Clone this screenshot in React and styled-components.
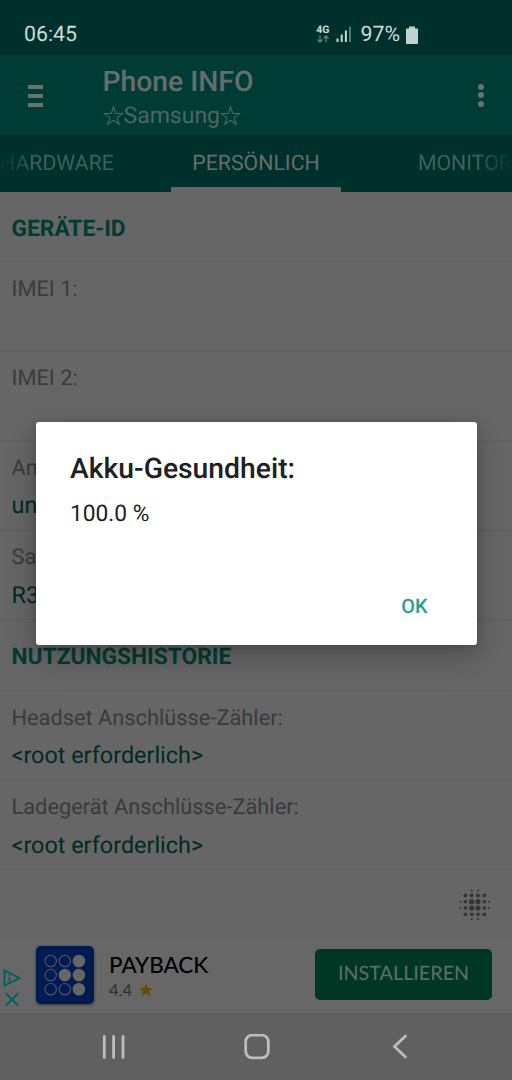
import styled, { createGlobalStyle } from "styled-components";

const App = () => {
  const SECTION_LIST = [
    {
      title: "GERÄTE-ID",
      height: 70,
      items: [
        { label: "IMEI 1:", value: "" },
        { label: "IMEI 2:", value: "" },
        { label: "An", value: "un" },
        { label: "Sa", value: "R3" },
      ],
    },
    {
      title: "NUTZUNGSHISTORIE",
      height: 71,
      items: [
        { label: "Headset Anschlüsse-Zähler:", value: "<root erforderlich>" },
        { label: "Ladegerät Anschlüsse-Zähler:", value: "<root erforderlich>" },
      ],
    },
  ];

  return (
    <St.Screen>
      <GlobalStyle />
      <StatusBar />

      <St.Toolbar>
        <St.MenuBtn type="button">
          <i />
          <i />
          <i />
        </St.MenuBtn>
        <St.TitleBox>
          <St.Title>Phone INFO</St.Title>
          <St.Subtitle>
            <Star />
            Samsung
            <Star />
          </St.Subtitle>
        </St.TitleBox>
        <St.MoreBtn type="button">
          <i />
          <i />
          <i />
        </St.MoreBtn>
      </St.Toolbar>

      <St.TabBar>
        <St.Tab $side="left">HARDWARE</St.Tab>
        <St.Tab $active>PERSÖNLICH</St.Tab>
        <St.Tab $side="right">MONITOR</St.Tab>
      </St.TabBar>

      <St.Content>
        {SECTION_LIST.map(({ title, height, items }) => (
          <section key={title}>
            <St.SectionTitle $height={height}>{title}</St.SectionTitle>
            {items.map(({ label, value }) => (
              <St.Item key={label}>
                <St.Label>{label}</St.Label>
                <St.Value>{value}</St.Value>
              </St.Item>
            ))}
          </section>
        ))}
        <St.Footer>
          <DotLogo />
        </St.Footer>
      </St.Content>

      <AdBanner />
      <NavBar />

      <St.Dialog role="dialog">
        <St.DialogTitle>Akku-Gesundheit:</St.DialogTitle>
        <St.DialogText>100.0 %</St.DialogText>
        <St.DialogBtn type="button">OK</St.DialogBtn>
      </St.Dialog>
    </St.Screen>
  );
};

export default App;

const StatusBar = () => (
  <St.StatusBar>
    <St.Clock>06:45</St.Clock>
    <St.Network>
      <St.NetworkType>4G</St.NetworkType>
      <svg width="12" height="8" viewBox="0 0 12 8" fill="none" stroke="#5b827d" strokeWidth="1.3">
        <path d="M3 0.5V7M0.5 4.500L3 7L5.500 4.500M9 7.500V1M6.500 3.500L9 1L11.500 3.500" />
      </svg>
    </St.Network>
    <St.Signal width="16" height="16" viewBox="0 0 16 16">
      <path fill="#c5d8d5" d="M0.5 12.500h2v3.500h-2zM4.700 8.500h2v7.500h-2zM8.900 4.500h2v11.500h-2z" />
      <path fill="#527a75" d="M13 0.5h2v15.500h-2z" />
    </St.Signal>
    <St.Percent>97%</St.Percent>
    <svg width="12" height="18" viewBox="0 0 12 18">
      <path fill="#c0d3d0" d="M3 0.5h6v2h2q1 0 1 1v13.500q0 1-1 1h-10q-1 0-1-1v-13.500q0-1 1-1h2z" />
    </svg>
  </St.StatusBar>
);

const Star = () => (
  <svg width="21" height="20" viewBox="0 0 21 20" fill="none" stroke="#4d6663" strokeWidth="1.1">
    <path d="M10.500 1L12.700 7.500H19.800L14.100 11.600L16.200 18.300L10.500 14.200L4.800 18.300L6.900 11.600L1.200 7.500H8.300Z" />
  </svg>
);

const DotLogo = () => {
  const DOT_SIZES = [
    [0, 0, 1, 1, 0, 0],
    [0, 1.9, 1.9, 1.9, 1.9, 0],
    [1, 1.8, 2.6, 2.6, 1.8, 1],
    [1, 1.8, 2.6, 2.6, 1.8, 1],
    [0, 1.9, 1.9, 1.9, 1.9, 0],
    [0, 0, 1, 1, 0, 0],
  ];
  const DOT_CENTERS = [1.4, 6.4, 12.7, 19, 25.3, 30];

  return (
    <svg width="32" height="32" viewBox="0 0 32 32" fill="#353535">
      {DOT_SIZES.map((row, y) =>
        row.map((r, x) => (
          <circle key={`${x}-${y}`} cx={DOT_CENTERS[x]} cy={DOT_CENTERS[y]} r={r} />
        ))
      )}
    </svg>
  );
};

const AdBanner = () => {
  const FILLED = [2, 4, 5, 8];

  return (
    <St.Ad>
      <St.AdChoices width="18" height="40" viewBox="0 0 18 40">
        <path d="M1.500 2.500V17.500L16.500 10Z M6.500 9V14.500 M6.500 6.300V7.700" />
        <path d="M3 25.500L15 37.500M15 25.500L3 37.500" />
      </St.AdChoices>
      <St.AdIcon>
        <svg width="42" height="42" viewBox="0 0 42 42">
          {Array.from({ length: 9 }, (_, i) => (
            <circle
              key={i}
              cx={6.7 + (i % 3) * 14.1}
              cy={7 + Math.floor(i / 3) * 14.1}
              r="5.700"
              fill={FILLED.includes(i) ? "#666" : "none"}
              stroke={FILLED.includes(i) ? "#666" : "#504f76"}
              strokeWidth="1.2"
            />
          ))}
        </svg>
      </St.AdIcon>
      <St.AdInfo>
        <St.AdName>PAYBACK</St.AdName>
        <St.AdRating>
          4.4
          <svg width="14" height="14" viewBox="0 0 14 14" fill="#654900">
            <path d="M7 0.300L8.700 5H13.800L9.800 8.100L11.300 13.200L7 10.200L2.700 13.200L4.200 8.100L0.200 5H5.300Z" />
          </svg>
        </St.AdRating>
      </St.AdInfo>
      <St.InstallBtn type="button">INSTALLIEREN</St.InstallBtn>
    </St.Ad>
  );
};

const NavBar = () => (
  <St.Nav>
    <svg width="26" height="26" viewBox="0 0 26 26">
      <path d="M4.300 2.500V23.500M13.600 2.500V23.500M23 2.500V23.500" />
    </svg>
    <svg width="26" height="26" viewBox="0 0 26 26">
      <rect x="1.700" y="1.200" width="22.600" height="22.600" rx="6.500" />
    </svg>
    <svg width="26" height="26" viewBox="0 0 26 26">
      <path d="M18.500 2L7.500 12.500L18.500 23" />
    </svg>
  </St.Nav>
);

const GlobalStyle = createGlobalStyle`
  * {
    box-sizing: border-box;
  }

  body,
  h1,
  h2,
  p {
    margin: 0;
  }

  body {
    background-color: #666;
    font-family: Roboto, "Liberation Sans", sans-serif;
    text-rendering: geometricPrecision;
  }

  button {
    padding: 0;
    border: none;
    background: none;
    font-family: inherit;
    text-rendering: inherit;
  }

  svg {
    flex-shrink: 0;
  }
`;

const St = {
  Screen: styled.main`
    position: relative;
    display: flex;
    flex-direction: column;

    width: 512px;
    height: 1080px;
    overflow: hidden;

    background-color: #666;
  `,

  StatusBar: styled.header`
    display: flex;
    align-items: center;

    height: 55px;
    padding: 14px 94px 0 24px;

    background-color: #00302b;
    color: #c5dedb;
  `,

  Clock: styled.span`
    margin-right: auto;
    font-size: 21.300px;
  `,

  Network: styled.span`
    display: flex;
    flex-direction: column;
    align-items: center;

    margin: -2px 7px 0 0;
  `,

  NetworkType: styled.span`
    font-size: 10.500px;
    font-weight: 700;
    line-height: 10px;
  `,

  Signal: styled.svg`
    margin: -1px 8px 0 0;
  `,

  Percent: styled.span`
    margin-right: 6px;
    font-size: 21.300px;
  `,

  Toolbar: styled.div`
    display: flex;
    align-items: center;

    height: 80px;
    padding: 0 28px;

    background-color: #003c36;
  `,

  MenuBtn: styled.button`
    display: flex;
    flex-direction: column;
    gap: 5px;

    width: 74.500px;
    padding-top: 2px;

    i {
      width: 15px;
      height: 4px;
      background-color: #667370;
    }
  `,

  TitleBox: styled.div`
    flex: 1;
    padding-top: 7px;
  `,

  Title: styled.h1`
    color: #666e6c;
    font-size: 28.300px;
    font-weight: 500;
    line-height: 34px;
  `,

  Subtitle: styled.p`
    display: flex;
    align-items: center;

    color: #4d6663;
    font-size: 23px;
    line-height: 33px;
  `,

  MoreBtn: styled.button`
    display: flex;
    flex-direction: column;
    gap: 2.500px;

    i {
      width: 6px;
      height: 6px;
      border-radius: 50%;
      background-color: #667370;
    }
  `,

  TabBar: styled.nav`
    display: grid;
    grid-template-columns: 171px 170px 171px;

    height: 57px;

    background-color: #00302b;
  `,

  Tab: styled.div`
    display: flex;
    justify-content: ${({ $side }) => ($side === "right" ? "flex-end" : $side === "left" ? "flex-start" : "center")};
    align-items: center;

    padding-top: 5px;
    border-bottom: 5px solid ${({ $active }) => ($active ? "#666" : "transparent")};

    color: ${({ $active }) => ($active ? "#666e6c" : "#40605c")};
    font-size: 21.300px;
    white-space: nowrap;
    ${({ $side }) =>
      $side &&
      `mask-image: linear-gradient(to ${$side}, #000 calc(100% - 34px), transparent);`}
  `,

  Content: styled.div`
    display: flex;
    flex-direction: column;
    flex: 1;
  `,

  SectionTitle: styled.h2`
    display: flex;
    align-items: center;

    height: ${({ $height }) => $height}px;
    padding: 3px 11.500px 0;

    border-bottom: 1px solid #5f5f5f;
    color: #003c30;
    font-size: 22.750px;
    font-weight: 700;
  `,

  Item: styled.div`
    height: 89.500px;
    padding: 9.500px 11.500px 0;

    border-bottom: 1px solid #5f5f5f;
    line-height: 36.500px;
  `,

  Label: styled.p`
    color: #3b3b3b;
    font-size: 21.800px;
  `,

  Value: styled.p`
    color: #002b24;
    font-size: 23.400px;
  `,

  Footer: styled.div`
    display: flex;
    justify-content: flex-end;

    padding: 19px 21px 0;
  `,

  Ad: styled.aside`
    display: flex;
    align-items: center;

    height: 74px;
    padding: 0 20px 2px 3px;

    background-color: #676767;
  `,

  AdChoices: styled.svg`
    margin: 25px 15px 0 0;

    fill: none;
    stroke: #005e61;
    stroke-width: 1.800;
  `,

  AdIcon: styled.div`
    display: flex;
    align-items: center;
    justify-content: center;

    width: 58px;
    height: 58px;

    border-radius: 5px;
    background-color: #001b4f;
    box-shadow: 0 1px 3px rgba(0, 0, 0, 0.5);
  `,

  AdInfo: styled.div`
    flex: 1;
    padding: 2px 0 0 15px;

    font-family: Lato, sans-serif;
  `,

  AdName: styled.p`
    color: #000;
    font-size: 22.400px;
    font-weight: 500;
    line-height: 28px;
  `,

  AdRating: styled.p`
    display: flex;
    align-items: center;
    gap: 7px;

    color: #303030;
    font-size: 16.500px;
    line-height: 23px;
  `,

  InstallBtn: styled.button`
    width: 177px;
    height: 51px;
    margin-top: -1px;
    padding-bottom: 2px;

    border-radius: 5px;
    background-color: #003624;
    color: #5a6b65;

    font-family: Lato, sans-serif;
    font-size: 19.700px;
    font-weight: 500;
  `,

  Nav: styled.nav`
    display: flex;
    justify-content: space-between;
    align-items: center;

    height: 67px;
    padding: 0 99px 0 100px;

    background-color: #606060;

    svg {
      fill: none;
      stroke: #bdbdbd;
      stroke-width: 2.800;
      stroke-linecap: round;
    }
  `,

  Dialog: styled.div`
    position: absolute;
    top: 422px;
    left: 36px;
    display: flex;
    flex-direction: column;

    width: 440.500px;
    height: 223px;
    padding: 29px 34px 0;

    border-radius: 3px;
    background-color: #fff;
    box-shadow: 0 10px 32px rgba(0, 0, 0, 0.25), 0 2px 8px rgba(0, 0, 0, 0.15);
  `,

  DialogTitle: styled.h2`
    color: #202020;
    font-size: 28.300px;
    font-weight: 500;
    line-height: 36px;
  `,

  DialogText: styled.p`
    margin-top: 11px;

    color: #202020;
    font-size: 22.750px;
    line-height: 32px;
  `,

  DialogBtn: styled.button`
    align-self: flex-end;

    margin-top: 60px;
    padding: 0 15px;

    color: #2a9d91;
    font-size: 19.900px;
    font-weight: 500;
    line-height: 34px;
  `,
};
